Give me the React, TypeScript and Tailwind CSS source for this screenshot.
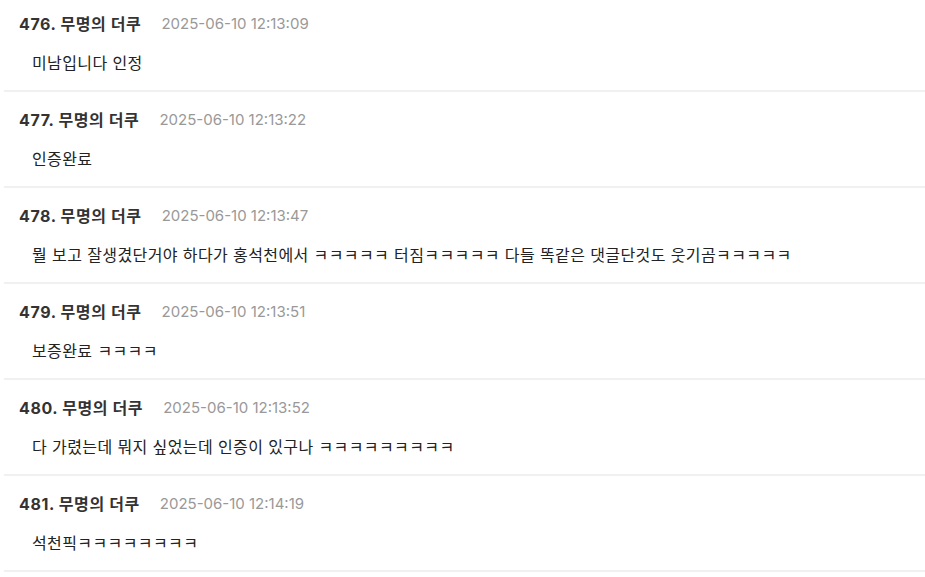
const COMMENTS = [
  { no: 476, date: '2025-06-10 12:13:09', body: '미남입니다 인정' },
  { no: 477, date: '2025-06-10 12:13:22', body: '인증완료' },
  {
    no: 478,
    date: '2025-06-10 12:13:47',
    body: '뭘 보고 잘생겼단거야 하다가 홍석천에서 ㅋㅋㅋㅋㅋ 터짐ㅋㅋㅋㅋㅋ 다들 똑같은 댓글단것도 웃기곰ㅋㅋㅋㅋㅋ',
  },
  { no: 479, date: '2025-06-10 12:13:51', body: '보증완료 ㅋㅋㅋㅋ' },
  { no: 480, date: '2025-06-10 12:13:52', body: '다 가렸는데 뭐지 싶었는데 인증이 있구나 ㅋㅋㅋㅋㅋㅋㅋㅋㅋ' },
  { no: 481, date: '2025-06-10 12:14:19', body: '석천픽ㅋㅋㅋㅋㅋㅋㅋㅋ' },
]

export default function App() {
  return (
    <div
      className="w-[925px] h-[577px] overflow-hidden bg-white"
      style={{ fontFamily: 'Inter, "Noto Sans CJK KR", sans-serif' }}
    >
      <ul className="-mt-1 pl-1">
        {COMMENTS.map((c) => (
          <li key={c.no} className="h-[96px] border-b-2 border-[#f0f0f0] pt-[18px]">
            {/* header */}
            <div className="flex items-center pl-[15px] h-5">
              <span className="text-[16px] font-bold text-[#333] tracking-[0.6px]">
                {c.no}. 무명의 더쿠
              </span>
              <span className="ml-5 text-[15px] text-[#999]">{c.date}</span>
            </div>
            <p className="mt-[18px] pl-7 h-[22px] leading-[22px] text-[16px] text-[#222] tracking-[0.4px]">
              {c.body}
            </p>
          </li>
        ))}
      </ul>
    </div>
  )
}
